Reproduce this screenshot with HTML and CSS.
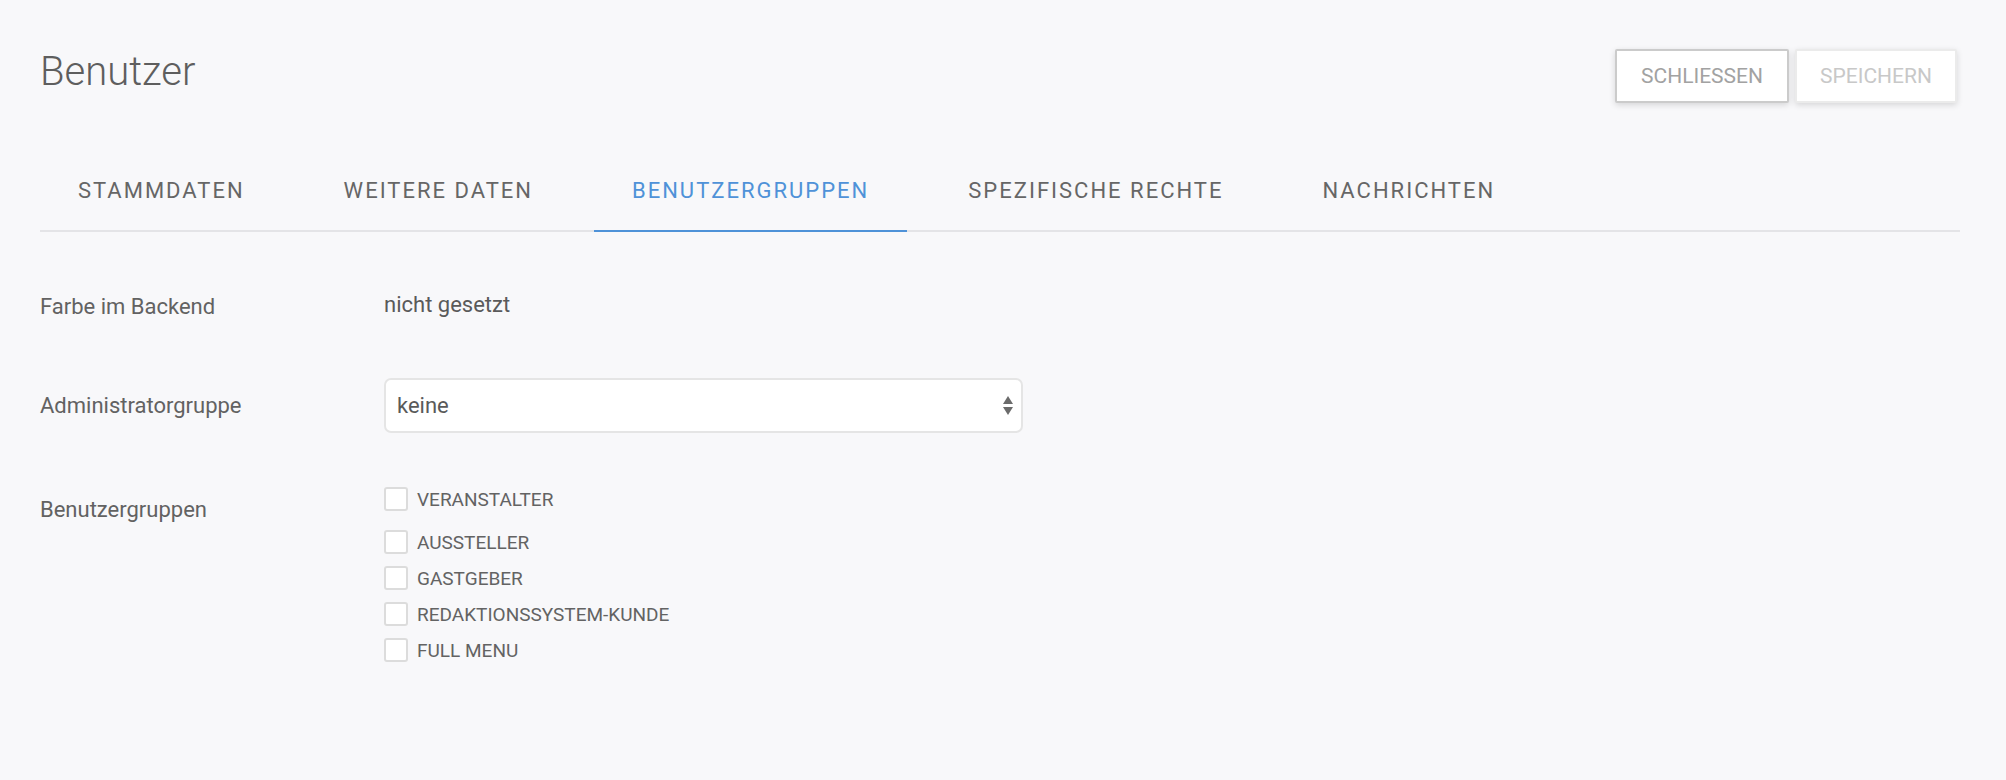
FILE: index.html
```html
<!DOCTYPE html>
<html lang="de">
<head>
    <meta charset="UTF-8">
    <title>Benutzer</title>
    <link rel="stylesheet" href="styles.css">
</head>
<body>
    <div class="page">
        <header class="header">
            <h1 class="title">Benutzer</h1>
            <div class="actions">
                <button class="btn btn-close">SCHLIESSEN</button>
                <button class="btn btn-save" disabled>SPEICHERN</button>
            </div>
        </header>

        <nav class="tabs">
            <a class="tab">Stammdaten</a>
            <a class="tab">Weitere Daten</a>
            <a class="tab active">Benutzergruppen</a>
            <a class="tab">Spezifische Rechte</a>
            <a class="tab">Nachrichten</a>
        </nav>

        <section class="form">
            <div class="row row-color">
                <div class="label">Farbe im Backend</div>
                <div class="value">nicht gesetzt</div>
            </div>
            <div class="row row-admin">
                <div class="label">Administratorgruppe</div>
                <div class="select">
                    <span>keine</span>
                    <svg class="arrows" width="10" height="19" viewBox="0 0 10 19">
                        <polygon points="0,8 5,0 10,8" fill="#6b6b6b"/>
                        <polygon points="0,11 10,11 5,19" fill="#6b6b6b"/>
                    </svg>
                </div>
            </div>
            <div class="row row-groups">
                <div class="label label-groups">Benutzergruppen</div>
                <div class="checks">
                    <label class="check first"><span class="box"></span>VERANSTALTER</label>
                    <label class="check"><span class="box"></span>AUSSTELLER</label>
                    <label class="check"><span class="box"></span>GASTGEBER</label>
                    <label class="check"><span class="box"></span>REDAKTIONSSYSTEM-KUNDE</label>
                    <label class="check"><span class="box"></span>FULL MENU</label>
                </div>
            </div>
        </section>
    </div>
</body>
</html>
```

FILE: styles.css
```css
body {
    margin: 0;
    background-color: #f8f8fa;
    font-family: Roboto, "Liberation Sans", sans-serif;
    color: #626262;
}
.page {
    padding: 0 46px 0 40px;
}

/* Kopfzeile */
.header {
    display: flex;
    justify-content: space-between;
    align-items: flex-start;
    padding-top: 49px;
}
.title {
    margin: 3px 0 0;
    font-size: 40px;
    line-height: 40px;
    font-weight: 300;
    color: #5e5e5e;
}
.actions {
    display: flex;
    gap: 6px;
    margin-right: 3px;
}
.btn {
    height: 54px;
    box-sizing: border-box;
    padding: 0 23px;
    background-color: #fff;
    font-family: Roboto, "Liberation Sans", sans-serif;
    font-size: 21px;
    border-radius: 2px;
    box-shadow: 0 2px 6px rgba(0,0,0,0.14);
    cursor: pointer;
}
.btn-close {
    border: 2px solid #cbcbcb;
    color: #a2a2a2;
    width: 174px;
}
.btn-save {
    border: 2px solid #ebebeb;
    color: #c8c8c8;
    width: 162px;
}

/* Reiter */
.tabs {
    display: flex;
    gap: 23px;
    margin-top: 49px;
    border-bottom: 2px solid #e4e4e7;
}
.tab {
    padding: 28px 38px;
    margin-bottom: -2px;
    font-size: 22px;
    line-height: 22px;
    letter-spacing: 2px;
    text-transform: uppercase;
    color: #666;
    border-bottom: 2px solid transparent;
}
.tab.active {
    color: #4f92d8;
    border-bottom-color: #4f92d8;
}

/* Formular */
.form {
    padding-top: 64px;
}
.row {
    display: flex;
    align-items: center;
    font-size: 22px;
    line-height: 22px;
}
.label {
    width: 344px;
    flex-shrink: 0;
}
.value {
    position: relative;
    top: -2px;
    color: #5a5a5a;
}
.row-admin {
    margin-top: 60px;
}
.select {
    width: 639px;
    height: 55px;
    box-sizing: border-box;
    display: flex;
    align-items: center;
    justify-content: space-between;
    padding: 0 8px 0 11px;
    background-color: #fff;
    border: 2px solid #e5e5e5;
    border-radius: 7px;
    color: #5a5a5a;
}
.arrows {
    display: block;
}
.row-groups {
    margin-top: 54px;
    align-items: flex-start;
}
.label-groups {
    margin-top: 12px;
}
.checks {
    display: flex;
    flex-direction: column;
    gap: 12px;
}
.check {
    display: flex;
    align-items: flex-start;
    gap: 9px;
    height: 24px;
    font-size: 19px;
    line-height: 20px;
    color: #636363;
}
.check.first {
    margin-bottom: 7px;
}
/* Kästchen oben bündig, Text 3px tiefer */
.box {
    width: 24px;
    height: 24px;
    box-sizing: border-box;
    margin-top: -3px;
    background-color: #fff;
    border: 2px solid #dcdcdc;
    border-radius: 3px;
}
.check {
    padding-top: 3px;
    box-sizing: border-box;
}
```
